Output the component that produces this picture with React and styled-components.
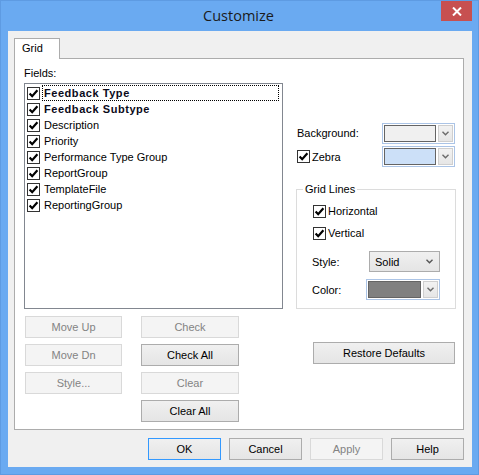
import React from "react";
import styled, { createGlobalStyle } from "styled-components";

const Global = createGlobalStyle`
  html, body { margin: 0; padding: 0; background: #ffffff; }
  body { font-family: "Liberation Sans", Arial, sans-serif; font-size: 11px; color: #000; }
  * { box-sizing: border-box; }
`;

const Window = styled.div`
  width: 479px;
  height: 475px;
  background: #6aaaf1;
  border: 1px solid #5e9be2;
  display: flex;
  flex-direction: column;
`;

const TitleBar = styled.div`
  height: 30px;
  display: grid;
  grid-template-columns: 1fr auto 1fr;
  align-items: start;
`;

const Title = styled.div`
  grid-column: 2;
  font-family: "Open Sans", "Noto Sans", sans-serif;
  font-size: 14.5px;
  color: #1b1b1b;
  line-height: 30px;
  margin-left: -2px;
`;

const CloseBtn = styled.div`
  grid-column: 3;
  justify-self: end;
  width: 31px;
  height: 20px;
  margin-right: 6px;
  background: #c75050;
  display: flex;
  align-items: center;
  justify-content: center;
`;

const Client = styled.div`
  margin: 0 6px 7px 7px;
  flex: 1;
  background: #f0f0f0;
  padding: 7px 8px 0 6px;
  display: flex;
  flex-direction: column;
`;

const TabStrip = styled.div`
  display: flex;
  height: 20px;
`;

const Tab = styled.div`
  width: 46px;
  height: 21px;
  background: #ffffff;
  border: 1px solid #acacac;
  border-bottom: none;
  padding: 3px 0 0 7px;
  position: relative;
  z-index: 1;
`;

const Panel = styled.div`
  height: 372px;
  background: #ffffff;
  border: 1px solid #acacac;
  display: flex;
  padding: 8px 0 0 9px;
  gap: 13px;
`;

const LeftCol = styled.div`
  width: 259px;
  display: flex;
  flex-direction: column;
`;

const Label = styled.div`
  line-height: 13px;
  height: 13px;
  white-space: nowrap;
`;

const ListBox = styled.div`
  margin-top: 3px;
  height: 226px;
  border: 1px solid #828790;
  padding: 1px 3px 0 2px;
`;

const Row = styled.div`
  height: 16px;
  display: flex;
  align-items: center;
  gap: 2px;
  white-space: nowrap;
`;

const ItemText = styled.span`
  flex: 1;
  height: 16px;
  line-height: 15px;
  padding-left: 1px;
  font-weight: ${(p) => (p.$bold ? "bold" : "normal")};
  letter-spacing: ${(p) => (p.$bold ? "0.55px" : "0")};
  border: 1px dotted ${(p) => (p.$focus ? "#000" : "transparent")};
  color: ${(p) => (p.$bold ? "#0a0a1a" : "#000")};
`;

const ButtonGrid = styled.div`
  margin-top: 7px;
  display: grid;
  grid-template-columns: 97px 98px;
  column-gap: 19px;
  row-gap: 6px;
  padding-left: 1px;
`;

const Button = styled.button`
  width: ${(p) => p.$w || 73}px;
  height: 22px;
  padding: 0;
  font-family: "Liberation Sans", Arial, sans-serif;
  font-size: 11px;
  color: ${(p) => (p.disabled ? "#838383" : "#000")};
  background: ${(p) =>
    p.disabled ? "#f4f4f4" : "linear-gradient(#f0f0f0, #e5e5e5)"};
  border: 1px solid
    ${(p) => (p.disabled ? "#d9d9d9" : p.$default ? "#3399ff" : "#acacac")};
  border-radius: 0;
  grid-column: ${(p) => p.$col || "auto"};
`;

const RightCol = styled.div`
  width: 160px;
  display: flex;
  flex-direction: column;
  padding-top: 56px;
`;

const FieldRow = styled.div`
  height: 21px;
  display: flex;
  align-items: center;
  justify-content: space-between;
  margin-top: ${(p) => p.$mt || 0}px;
  padding-left: 1px;
  padding-right: 1px;
`;

const CheckLabel = styled.label`
  display: flex;
  align-items: center;
  gap: 2px;
  height: 16px;
  white-space: nowrap;
`;

const Box = styled.span`
  width: 13px;
  height: 13px;
  border: 1px solid #333333;
  background: #ffffff;
  display: inline-flex;
  align-items: center;
  justify-content: center;
  flex: none;
`;

const ColorCombo = styled.div`
  width: ${(p) => p.$w || 73}px;
  height: 21px;
  border: 1px solid #abc4e6;
  background: #ffffff;
  display: flex;
  padding: 1px;
  gap: 2px;
`;

const Swatch = styled.div`
  flex: 1;
  border: 1px solid #646464;
  background: ${(p) => p.$color};
`;

const DropBtn = styled.div`
  width: 15px;
  background: linear-gradient(#f2f2f2, #e6e6e6);
  border: 1px solid #cfcfcf;
  display: flex;
  align-items: center;
  justify-content: center;
`;

const Group = styled.fieldset`
  margin: 16px 0 0 0;
  padding: 7px 0 8px 15px;
  border: 1px solid #dcdcdc;
  min-width: 0;
  height: 126px;
`;

const Legend = styled.legend`
  padding: 0 2px;
  margin-left: -9px;
  line-height: 13px;
`;

const GroupRow = styled.div`
  display: flex;
  align-items: center;
  height: ${(p) => p.$h || 16}px;
  margin-top: ${(p) => p.$mt || 0}px;
  padding-left: ${(p) => p.$pl || 0}px;
`;

const GroupLabel = styled.span`
  width: ${(p) => p.$w}px;
  flex: none;
`;

const Select = styled.div`
  width: 71px;
  height: 21px;
  border: 1px solid #acacac;
  background: linear-gradient(#f0f0f0, #e5e5e5);
  display: flex;
  align-items: center;
  justify-content: space-between;
  padding: 0 6px 0 5px;
`;

const RestoreBtn = styled(Button)`
  margin: 33px 0 0 17px;
`;

const BottomBar = styled.div`
  margin-top: 8px;
  display: flex;
  justify-content: flex-end;
  gap: 8px;
`;

const Check = () => (
  <Box>
    <svg width="11" height="11" viewBox="0 0 11 11">
      <path d="M1.6 5.4 L4.2 8.2 L9.4 2.2" fill="none" stroke="#000" strokeWidth="2.2" />
    </svg>
  </Box>
);

const Chevron = ({ color = "#6b6b6b" }) => (
  <svg width="7" height="5" viewBox="0 0 7 5">
    <path d="M0.5 0.8 L3.5 3.8 L6.5 0.8" fill="none" stroke={color} strokeWidth="1.4" />
  </svg>
);

const fields = [
  { name: "Feedback Type", bold: true, focus: true },
  { name: "Feedback Subtype", bold: true },
  { name: "Description" },
  { name: "Priority" },
  { name: "Performance Type Group" },
  { name: "ReportGroup" },
  { name: "TemplateFile" },
  { name: "ReportingGroup" },
];

export default function App() {
  return (
    <>
      <Global />
      <Window>
        <TitleBar>
          <Title>Customize</Title>
          <CloseBtn>
            <svg width="10" height="9" viewBox="0 0 10 9">
              <path d="M1 0.5 L9 8.5 M9 0.5 L1 8.5" stroke="#fff" strokeWidth="2" />
            </svg>
          </CloseBtn>
        </TitleBar>
        <Client>
          <TabStrip>
            <Tab>Grid</Tab>
          </TabStrip>
          <Panel>
            <LeftCol>
              <Label>Fields:</Label>
              <ListBox>
                {fields.map((f) => (
                  <Row key={f.name}>
                    <Check />
                    <ItemText $bold={f.bold} $focus={f.focus}>
                      {f.name}
                    </ItemText>
                  </Row>
                ))}
              </ListBox>
              <ButtonGrid>
                <Button $w={97} disabled>Move Up</Button>
                <Button $w={98} disabled>Check</Button>
                <Button $w={97} disabled>Move Dn</Button>
                <Button $w={98}>Check All</Button>
                <Button $w={97} disabled>Style...</Button>
                <Button $w={98} disabled>Clear</Button>
                <Button $w={98} $col={2}>Clear All</Button>
              </ButtonGrid>
            </LeftCol>
            <RightCol>
              <FieldRow>
                <Label>Background:</Label>
                <ColorCombo>
                  <Swatch $color="#f0f0f0" />
                  <DropBtn>
                    <Chevron />
                  </DropBtn>
                </ColorCombo>
              </FieldRow>
              <FieldRow $mt={2}>
                <CheckLabel>
                  <Check />
                  Zebra
                </CheckLabel>
                <ColorCombo>
                  <Swatch $color="#cce0f8" />
                  <DropBtn>
                    <Chevron />
                  </DropBtn>
                </ColorCombo>
              </FieldRow>
              <Group>
                <Legend>Grid Lines</Legend>
                <GroupRow $pl={1}>
                  <CheckLabel>
                    <Check />
                    Horizontal
                  </CheckLabel>
                </GroupRow>
                <GroupRow $pl={1} $mt={6}>
                  <CheckLabel>
                    <Check />
                    Vertical
                  </CheckLabel>
                </GroupRow>
                <GroupRow $h={21} $mt={10}>
                  <GroupLabel $w={57}>Style:</GroupLabel>
                  <Select>
                    <span>Solid</span>
                    <Chevron color="#555" />
                  </Select>
                </GroupRow>
                <GroupRow $h={21} $mt={7}>
                  <GroupLabel $w={54}>Color:</GroupLabel>
                  <ColorCombo $w={74}>
                    <Swatch $color="#808080" />
                    <DropBtn>
                      <Chevron />
                    </DropBtn>
                  </ColorCombo>
                </GroupRow>
              </Group>
              <RestoreBtn $w={142}>Restore Defaults</RestoreBtn>
            </RightCol>
          </Panel>
          <BottomBar>
            <Button $default>OK</Button>
            <Button>Cancel</Button>
            <Button disabled>Apply</Button>
            <Button>Help</Button>
          </BottomBar>
        </Client>
      </Window>
    </>
  );
}
